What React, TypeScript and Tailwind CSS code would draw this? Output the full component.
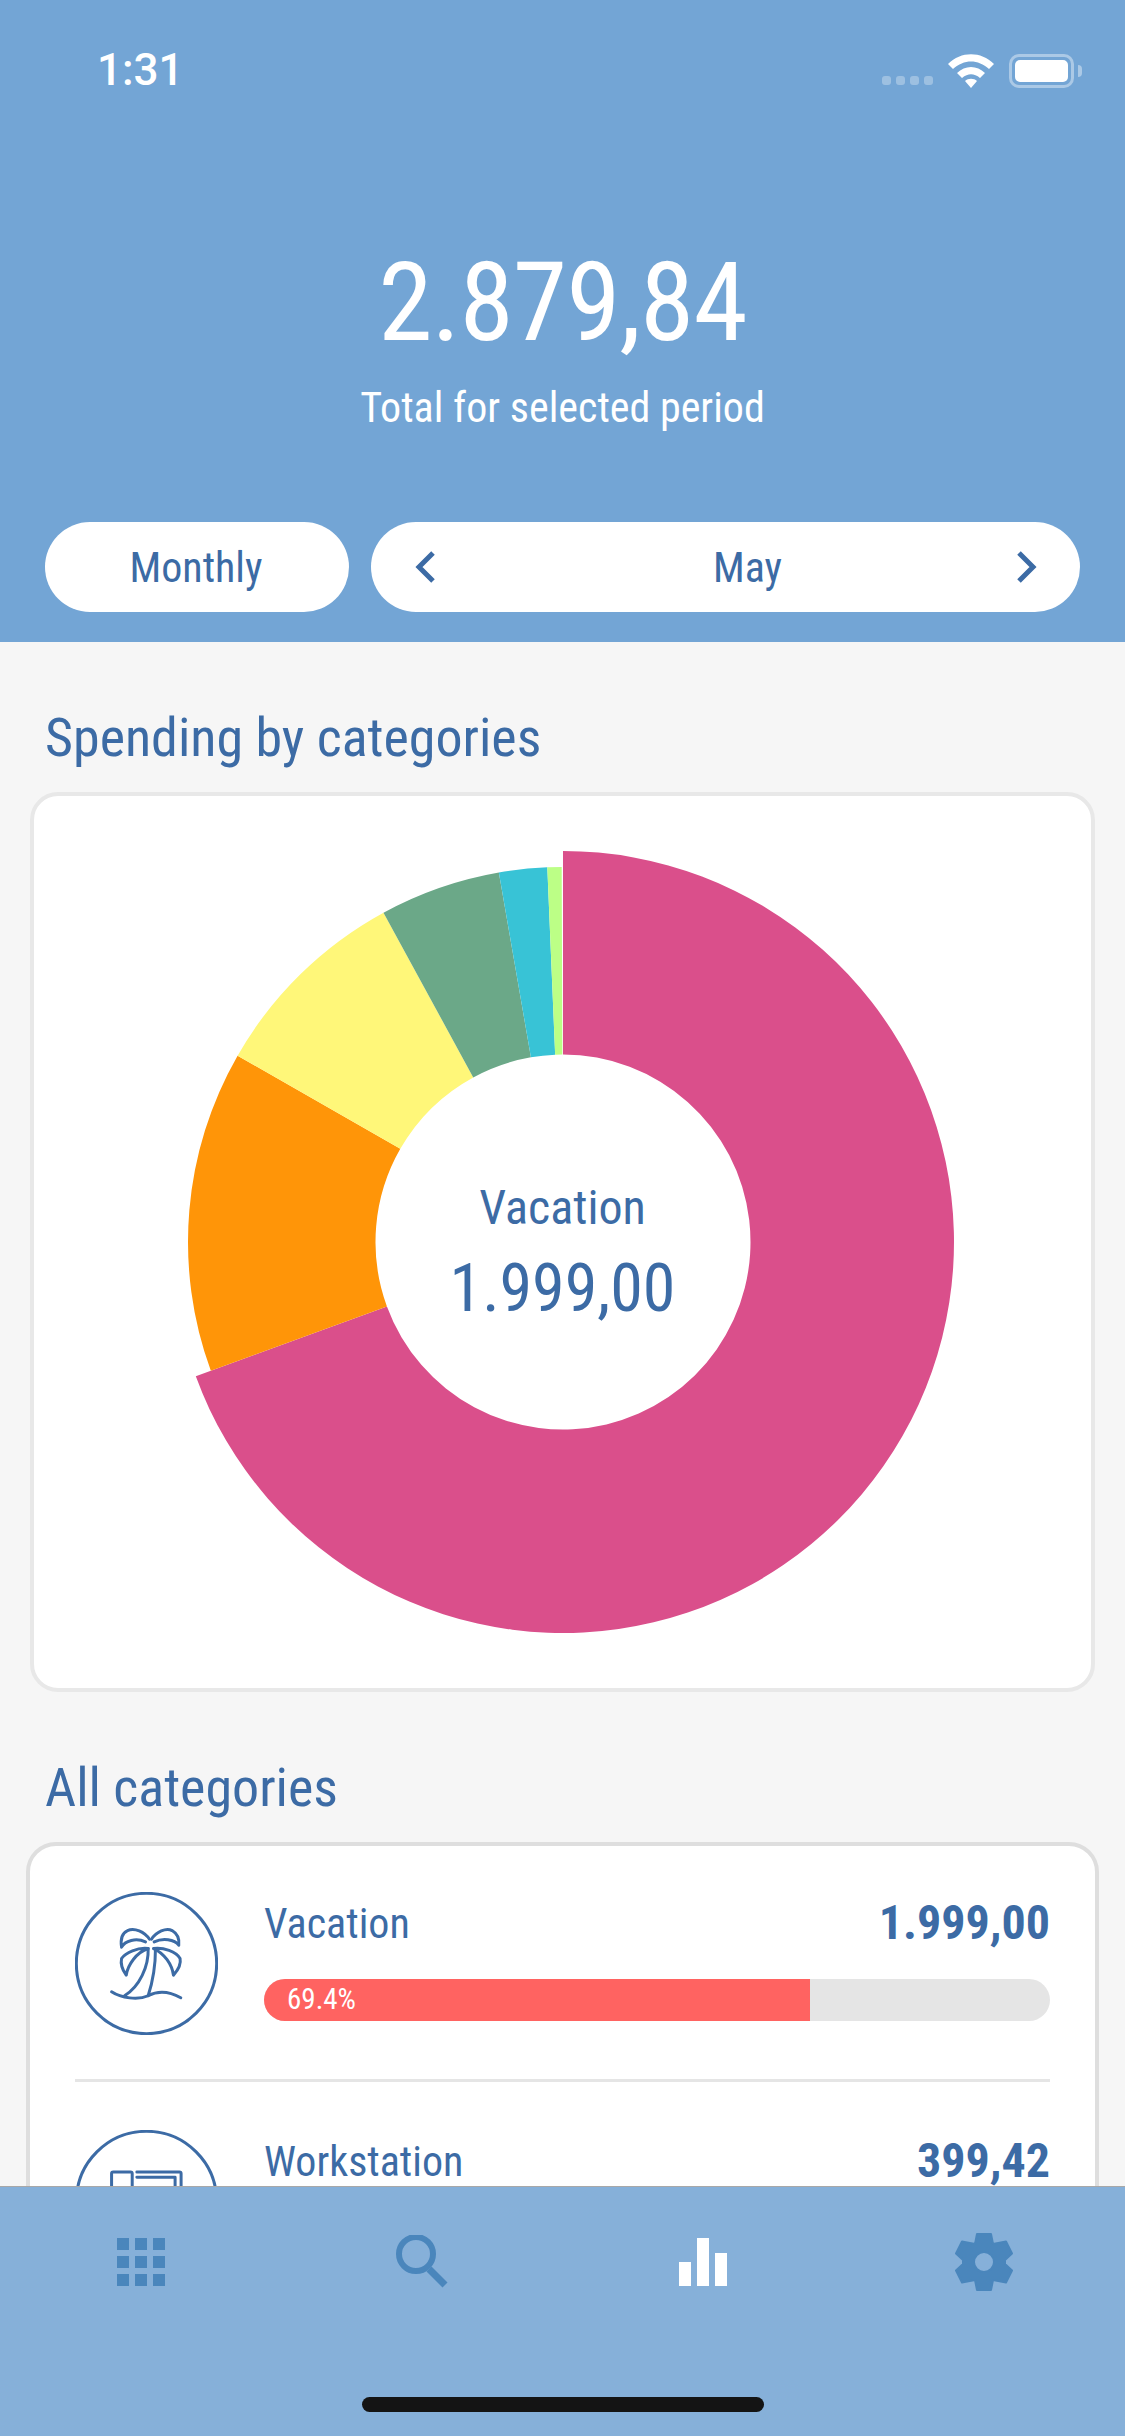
const BLUE = "#3c6ba5";

// donut slice between two angles (deg, clockwise from top)
const slicePath = (from: number, to: number, outer: number, inner: number) => {
  const pt = (a: number, r: number) => {
    const t = ((a - 90) * Math.PI) / 180;
    return `${(r * Math.cos(t)).toFixed(2)} ${(r * Math.sin(t)).toFixed(2)}`;
  };
  const large = to - from > 180 ? 1 : 0;
  return `M${pt(from, outer)}A${outer} ${outer} 0 ${large} 1 ${pt(to, outer)}L${pt(to, inner)}A${inner} ${inner} 0 ${large} 0 ${pt(from, inner)}Z`;
};

const slices = [
  { from: 0, to: 249.9, outer: 391, color: "#da4f8b" },
  { from: 249.9, to: 299.8, outer: 375, color: "#ff9508" },
  { from: 299.8, to: 331.4, outer: 375, color: "#fff779" },
  { from: 331.4, to: 350.15, outer: 375, color: "#6ba888" },
  { from: 350.15, to: 357.6, outer: 375, color: "#38c3d6" },
  { from: 357.6, to: 359.8, outer: 375, color: "#bcff86" },
];

const Donut = () => (
  <svg width="784" height="784" viewBox="-392 -392 784 784">
    {slices.map((s) => (
      <path key={s.color} d={slicePath(s.from, s.to, s.outer, 187.5)} fill={s.color} />
    ))}
  </svg>
);

const PalmIcon = () => (
  <svg width="143" height="143" viewBox="76 66 430 430" fill="none" stroke={BLUE} strokeWidth="9" strokeLinecap="round" strokeLinejoin="round">
    <circle cx="291" cy="281" r="211" />
    <path d="M300 208C285 186 255 172 234 182C216 190 213 212 216 232C226 212 260 203 288 216" />
    <path d="M306 208C320 186 350 172 368 182C385 192 390 210 388 226C375 208 340 203 314 216" />
    <path d="M296 236C265 232 228 248 216 266C212 285 222 305 230 316C235 285 260 248 296 236" />
    <path d="M312 236C342 232 380 245 392 266C396 285 382 305 372 316C368 285 345 250 312 236" />
    <path d="M296 236C298 290 270 350 225 378M318 236C318 285 310 335 296 378" />
    <path d="M186 366C215 385 265 392 296 378C330 360 360 365 394 384" />
  </svg>
);

const WorkstationIcon = () => (
  <svg width="143" height="143" viewBox="76 779 430 430" fill="none" stroke={BLUE} strokeWidth="9" strokeLinecap="round" strokeLinejoin="round">
    <circle cx="291" cy="994" r="211" />
    <path d="M186 1040V910Q186 905 191 905H243Q248 905 248 910V1040" />
    <path d="M262 905H390Q395 905 395 910V1040M262 921H377V1040" />
  </svg>
);

const CategoryRow = ({ name, amount, percent, icon }: { name: string; amount: string; percent: number; icon: React.ReactNode }) => (
  <div className="flex gap-[46px] pt-[48px] first:pt-[46px] pb-[44px] border-b-[3px] border-[#e5e5e5]">
    <div className="shrink-0">{icon}</div>
    <div className="flex-1">
      <div className="flex justify-between items-center h-[52px] mt-[5px]">
        <span className="text-[42px] text-[#3c6ba5]">{name}</span>
        <span className="text-[48px] font-bold text-[#3c6ba5]">{amount}</span>
      </div>
      <div className="mt-[30px] h-[42px] rounded-full bg-[#e5e5e5] overflow-hidden">
        <div className="h-full bg-[#ff6361] flex items-center pl-[23px] text-[29px] text-white" style={{ width: `${percent + 0.1}%` }}>
          {percent}%
        </div>
      </div>
    </div>
  </div>
);

export default function App() {
  return (
    <div className="relative h-[2436px] w-[1125px] overflow-hidden bg-[#f6f6f6] font-['Roboto_Condensed',Roboto,sans-serif] [font-stretch:75%]">
      {/* Header */}
      <header className="h-[642px] bg-[#73a5d5] flex flex-col">
        <div className="flex items-center justify-between pt-[44px] pl-[97px] pr-[43px] h-[96px]">
          <span className="font-['Roboto',sans-serif] text-[44px] font-medium text-white [font-stretch:100%]">1:31</span>
          <div className="flex items-end gap-[15px] mt-[2px]">
            <div className="flex gap-[5px] mb-[3px]">
              <span className="w-[9px] h-[9px] rounded-[3px] bg-white/30" />
              <span className="w-[9px] h-[9px] rounded-[3px] bg-white/30" />
              <span className="w-[9px] h-[9px] rounded-[3px] bg-white/30" />
              <span className="w-[9px] h-[9px] rounded-[3px] bg-white/30" />
            </div>
            <svg width="46" height="34" viewBox="0 0 46 34" fill="white">
              <path d="M0 10C13-3 33-3 46 10L41 15C30 5 16 5 5 15Z" />
              <path d="M9 19C17 11 29 11 37 19L32 24C26 19 20 19 14 24Z" />
              <path d="M17 27C20 24 26 24 29 27L23 34Z" />
            </svg>
            <div className="flex items-center gap-[4px]">
              <div className="w-[65px] h-[34px] rounded-[10px] border-[3px] border-white/40 p-[3px]">
                <div className="h-full rounded-[5px] bg-white" />
              </div>
              <span className="w-[4px] h-[12px] rounded-r-[4px] bg-white/40" />
            </div>
          </div>
        </div>
        <div className="mt-[152px] text-center text-[110px] leading-[110px] tracking-[-1px] text-white">2.879,84</div>
        <div className="mt-[25px] text-center text-[42px] leading-[50px] text-white">Total for selected period</div>
        <div className="mt-[89px] flex gap-[22px] pl-[45px] pr-[45px]">
          <div className="w-[304px] h-[90px] pr-[2px] rounded-full bg-white flex items-center justify-center text-[42px] text-[#3c6ba5]">Monthly</div>
          <div className="flex-1 h-[90px] rounded-full bg-white flex items-center pl-[44px] pr-[43px] text-[42px] text-[#3c6ba5]">
            <svg width="20" height="32" viewBox="0 0 20 32" fill="none" stroke={BLUE} strokeWidth="5">
              <path d="M18 2L4 16L18 30" />
            </svg>
            <span className="flex-1 text-center pl-[43px]">May</span>
            <svg width="20" height="32" viewBox="0 0 20 32" fill="none" stroke={BLUE} strokeWidth="5">
              <path d="M2 2L16 16L2 30" />
            </svg>
          </div>
        </div>
      </header>

      {/* Spending */}
      <h2 className="mt-[61px] ml-[45px] text-[54px] leading-[70px] font-normal text-[#3c6ba5]">Spending by categories</h2>
      <section className="relative mx-[30px] mt-[19px] h-[900px] rounded-[28px] border-4 border-[#e8e8e8] bg-white flex items-center justify-center">
        <Donut />
        <div className="absolute inset-0 pt-[23px] flex flex-col items-center justify-center text-[#3c6ba5]">
          <span className="text-[48px] leading-[60px]">Vacation</span>
          <span className="mt-[11px] text-[66px] leading-[80px]">1.999,00</span>
        </div>
      </section>

      {/* All categories */}
      <h2 className="mt-[61px] ml-[45px] text-[54px] leading-[70px] font-normal text-[#3c6ba5]">All categories</h2>
      <section className="mx-[26px] mt-[19px] rounded-[30px] border-4 border-[#dedede] bg-white px-[45px]">
        <CategoryRow name="Vacation" amount="1.999,00" percent={69.4} icon={<PalmIcon />} />
        <CategoryRow name="Workstation" amount="399,42" percent={13.9} icon={<WorkstationIcon />} />
      </section>

      {/* Tab bar */}
      <nav className="absolute bottom-0 left-0 right-0 h-[250px] bg-[#86b0d9] border-t border-[#a8a8a8]">
        <svg className="absolute left-[117px] top-[51px]" width="48" height="48" viewBox="0 0 48 48" fill="#4a86bc">
          <path d="M0 0h12v12H0zM18 0h12v12H18zM36 0h12v12H36zM0 18h12v12H0zM18 18h12v12H18zM36 18h12v12H36zM0 36h12v12H0zM18 36h12v12H18zM36 36h12v12H36z" />
        </svg>
        <svg className="absolute left-[396px] top-[48px]" width="52" height="53" viewBox="0 0 52 53" fill="none" stroke="#4a86bc">
          <circle cx="20" cy="19" r="17" strokeWidth="6" />
          <path d="M33 34L49 50" strokeWidth="7" />
        </svg>
        <svg className="absolute left-[679px] top-[51px]" width="48" height="48" viewBox="0 0 48 48" fill="white">
          <path d="M0 24h12v24H0zM18 0h12v48H18zM36 15h12v33H36z" />
        </svg>
        <svg className="absolute left-[954px] top-[45px]" width="60" height="60" viewBox="0 0 60 60" fill="#4a86bc" stroke="#4a86bc" strokeWidth="2" strokeLinejoin="round">
          <path fillRule="evenodd" d="M23 2H37L39 12L52 9.5L58 21.5L51 28V32L58 38.5L52 50.5L39 48L37 58H23L21 48L8 50.5L2 38.5L9 32V28L2 21.5L8 9.5L21 12ZM30 20A10 10 0 1 0 30 40A10 10 0 1 0 30 20Z" />
        </svg>
        <div className="absolute left-[362px] top-[210px] w-[402px] h-[15px] rounded-full bg-[#141414]" />
      </nav>
    </div>
  );
}
